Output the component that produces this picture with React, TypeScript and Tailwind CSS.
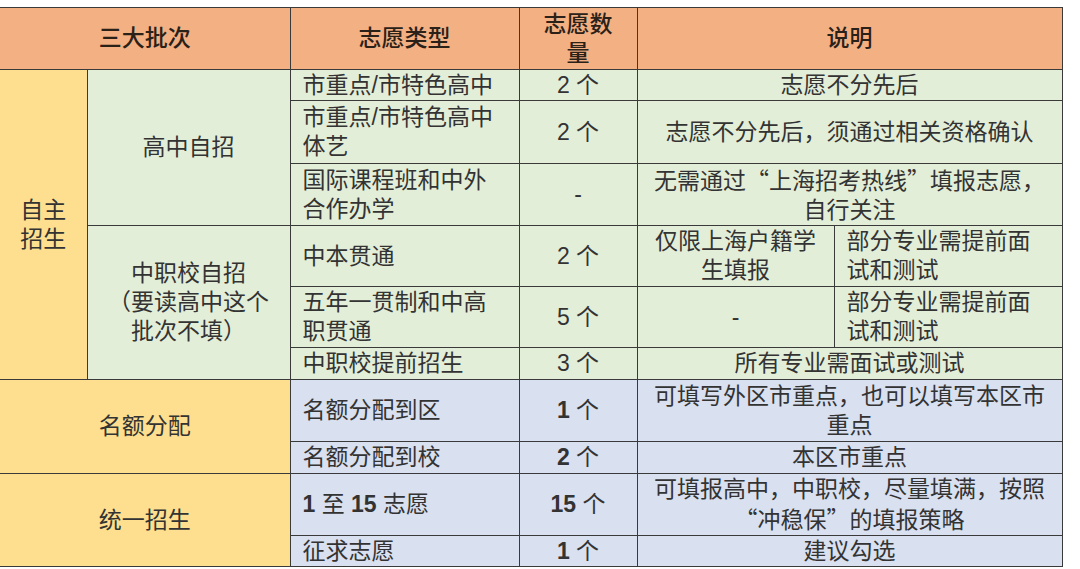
import React from 'react'

const cell = 'border-[1.5px] border-[#3a3a3a] align-middle'
const head = `${cell} bg-[#f3b083] text-center font-medium text-[#2a2118]`
const yellow = 'bg-[#fddf8f]'
const green = 'bg-[#e3eed9]'
const blue = 'bg-[#d9e0ef]'

const B: React.FC<{ children: React.ReactNode }> = ({ children }) => (
    <span className="font-bold">{children}</span>
)

// full-width quote marks need the CJK font
const Q: React.FC<{ children: React.ReactNode }> = ({ children }) => (
    <span style={{ fontFamily: '"Noto Sans CJK SC", sans-serif' }}>{children}</span>
)

const App: React.FC = () => {
    return (
        <div className="h-[569px] w-[1080px] overflow-hidden bg-white pt-[7px]">
            <table
                className="w-[1062px] table-fixed border-collapse text-[23px] leading-[29px] text-[#333]"
                style={{ fontFamily: '"Liberation Sans", "Noto Sans CJK SC", sans-serif' }}
            >
                <colgroup>
                    <col className="w-[87px]" />
                    <col className="w-[203px]" />
                    <col className="w-[229px]" />
                    <col className="w-[118px]" />
                    <col className="w-[197px]" />
                    <col className="w-[228px]" />
                </colgroup>
                <thead>
                    <tr className="h-[62px]">
                        <th colSpan={2} className={`${head} border-l-0`}>
                            三大批次
                        </th>
                        <th className={head}>志愿类型</th>
                        <th className={head}>
                            志愿数
                            <br />量
                        </th>
                        <th colSpan={2} className={head}>
                            说明
                        </th>
                    </tr>
                </thead>
                <tbody>
                    <tr className="h-[31px]">
                        <td rowSpan={6} className={`${cell} ${yellow} border-l-0 text-center`}>
                            自主
                            <br />
                            招生
                        </td>
                        <td rowSpan={3} className={`${cell} ${green} text-center`}>
                            高中自招
                        </td>
                        <td className={`${cell} ${green} pl-3`}>市重点/市特色高中</td>
                        <td className={`${cell} ${green} text-center`}>2 个</td>
                        <td colSpan={2} className={`${cell} ${green} text-center`}>
                            志愿不分先后
                        </td>
                    </tr>
                    <tr className="h-[63px]">
                        <td className={`${cell} ${green} pl-3`}>
                            市重点/市特色高中
                            <br />
                            体艺
                        </td>
                        <td className={`${cell} ${green} text-center`}>2 个</td>
                        <td colSpan={2} className={`${cell} ${green} text-center`}>
                            志愿不分先后，须通过相关资格确认
                        </td>
                    </tr>
                    <tr className="h-[62px]">
                        <td className={`${cell} ${green} pl-3`}>
                            国际课程班和中外
                            <br />
                            合作办学
                        </td>
                        <td className={`${cell} ${green} text-center`}>-</td>
                        <td colSpan={2} className={`${cell} ${green} text-center`}>
                            <Q>无需通过“上海招考热线”填报志愿，</Q>
                            <br />
                            自行关注
                        </td>
                    </tr>
                    <tr className="h-[61px]">
                        <td rowSpan={3} className={`${cell} ${green} text-center`}>
                            中职校自招
                            <br />
                            （要读高中这个
                            <br />
                            批次不填）
                        </td>
                        <td className={`${cell} ${green} pl-3`}>中本贯通</td>
                        <td className={`${cell} ${green} text-center`}>2 个</td>
                        <td className={`${cell} ${green} text-center`}>
                            仅限上海户籍学
                            <br />
                            生填报
                        </td>
                        <td className={`${cell} ${green} pl-3`}>
                            部分专业需提前面
                            <br />
                            试和测试
                        </td>
                    </tr>
                    <tr className="h-[61px]">
                        <td className={`${cell} ${green} pl-3`}>
                            五年一贯制和中高
                            <br />
                            职贯通
                        </td>
                        <td className={`${cell} ${green} text-center`}>5 个</td>
                        <td className={`${cell} ${green} text-center`}>-</td>
                        <td className={`${cell} ${green} pl-3`}>
                            部分专业需提前面
                            <br />
                            试和测试
                        </td>
                    </tr>
                    <tr className="h-[32px]">
                        <td className={`${cell} ${green} pl-3`}>中职校提前招生</td>
                        <td className={`${cell} ${green} text-center`}>3 个</td>
                        <td colSpan={2} className={`${cell} ${green} text-center`}>
                            所有专业需面试或测试
                        </td>
                    </tr>
                    <tr className="h-[62px]">
                        <td rowSpan={2} colSpan={2} className={`${cell} ${yellow} border-l-0 text-center`}>
                            名额分配
                        </td>
                        <td className={`${cell} ${blue} pl-3`}>名额分配到区</td>
                        <td className={`${cell} ${blue} text-center`}>
                            <B>1</B> 个
                        </td>
                        <td colSpan={2} className={`${cell} ${blue} text-center`}>
                            可填写外区市重点，也可以填写本区市
                            <br />
                            重点
                        </td>
                    </tr>
                    <tr className="h-[32px]">
                        <td className={`${cell} ${blue} pl-3`}>名额分配到校</td>
                        <td className={`${cell} ${blue} text-center`}>
                            <B>2</B> 个
                        </td>
                        <td colSpan={2} className={`${cell} ${blue} text-center`}>
                            本区市重点
                        </td>
                    </tr>
                    <tr className="h-[62px]">
                        <td rowSpan={2} colSpan={2} className={`${cell} ${yellow} border-l-0 text-center`}>
                            统一招生
                        </td>
                        <td className={`${cell} ${blue} pl-3`}>
                            <B>1</B> 至 <B>15</B> 志愿
                        </td>
                        <td className={`${cell} ${blue} text-center`}>
                            <B>15</B> 个
                        </td>
                        <td colSpan={2} className={`${cell} ${blue} text-center`}>
                            可填报高中，中职校，尽量填满，按照
                            <br />
                            <Q>“冲稳保”的填报策略</Q>
                        </td>
                    </tr>
                    <tr className="h-[31px]">
                        <td className={`${cell} ${blue} pl-3`}>征求志愿</td>
                        <td className={`${cell} ${blue} text-center`}>
                            <B>1</B> 个
                        </td>
                        <td colSpan={2} className={`${cell} ${blue} text-center`}>
                            建议勾选
                        </td>
                    </tr>
                </tbody>
            </table>
        </div>
    )
}

export default App
